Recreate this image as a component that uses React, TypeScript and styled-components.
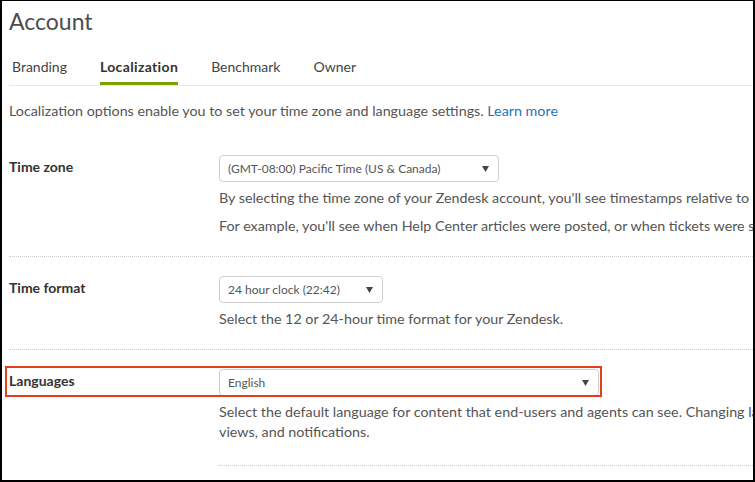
import React from 'react';
import styled, { createGlobalStyle } from 'styled-components';

const colors = {
    text: '#555555',
    label: '#333333',
    title: '#4d4d4d',
    link: '#1f73b7',
    green: '#78a300',
    line: '#e9e9e9',
    dotted: '#cccccc',
    highlight: '#e2401c',
};

const GlobalStyle = createGlobalStyle`
    html, body {
        margin: 0;
        padding: 0;
        background: #fff;
    }
    body {
        font-family: Lato, "Open Sans", "Liberation Sans", sans-serif;
        overflow: hidden;
    }
`;

interface ISetting {
    label: string
    value: string
    width: number
    notes: React.ReactNode[]
    highlighted?: boolean
    innerRule?: boolean
}

const settings: ISetting[] = [
    {
        label: 'Time zone',
        value: '(GMT-08:00) Pacific Time (US & Canada)',
        width: 280,
        notes: [
            "By selecting the time zone of your Zendesk account, you'll see timestamps relative to time zone in your account.",
            "For example, you'll see when Help Center articles were posted, or when tickets were submitted.",
        ],
    },
    {
        label: 'Time format',
        value: '24 hour clock (22:42)',
        width: 164,
        notes: ['Select the 12 or 24-hour time format for your Zendesk.'],
    },
    {
        label: 'Languages',
        value: 'English',
        width: 380,
        highlighted: true,
        innerRule: true,
        notes: [
            <>
                Select the default language for content that end-users and agents can see. Changing languages
                <br />
                views, and notifications.
            </>,
        ],
    },
];

const tabs = ['Branding', 'Localization', 'Benchmark', 'Owner'];

const Arrow = (): JSX.Element => (
    <svg width="7" height="6" viewBox="0 0 7 6">
        <path d="M0 0 H7 L3.5 6 Z" fill="#444" />
    </svg>
);

const App = (): JSX.Element => {
    return (
        <>
            <GlobalStyle />
            <SFrame>
                <STitle>Account</STitle>
                <STabs>
                    {tabs.map((tab) => (
                        <STab key={tab} active={tab === 'Localization'}>{tab}</STab>
                    ))}
                </STabs>
                <SIntro>
                    Localization options enable you to set your time zone and language settings. <SLink>Learn more</SLink>
                </SIntro>
                {settings.map((setting, i) => (
                    <SRow key={setting.label} first={i === 0} inner={!!setting.innerRule}>
                        {setting.highlighted && <SHighlight />}
                        <SLabel>{setting.label}</SLabel>
                        <SContent>
                            <SSelect style={{ width: setting.width }}>
                                <span>{setting.value}</span>
                                <Arrow />
                            </SSelect>
                            {setting.notes.map((note, n) => (
                                <SNote key={n}>{note}</SNote>
                            ))}
                        </SContent>
                    </SRow>
                ))}
            </SFrame>
        </>
    );
};

const SFrame = styled.div`
    width: 755px;
    height: 482px;
    box-sizing: border-box;
    border: 2px solid #000;
    border-top-width: 1px;
    padding-left: 7px;
    overflow: hidden;
    color: ${colors.text};
    font-size: 14.3px;
`;

const STitle = styled.h1`
    margin: 0;
    padding-top: 5px;
    height: 30px;
    font-size: 23px;
    line-height: 30px;
    font-weight: 400;
    color: ${colors.title};
`;

const STabs = styled.div`
    display: flex;
    gap: 33px;
    height: 50px;
    box-sizing: border-box;
    padding-left: 3px;
    border-bottom: 1px solid ${colors.line};
    align-items: flex-end;
`;

const STab = styled.div<{ active?: boolean }>`
    padding-bottom: 5px;
    line-height: 20px;
    font-size: 14px;
    color: ${(p): string => (p.active ? '#333' : '#444')};
    font-weight: ${(p): number => (p.active ? 700 : 400)};
    letter-spacing: ${(p): string => (p.active ? '0.35px' : '0')};
    border-bottom: 3px solid ${(p): string => (p.active ? colors.green : 'transparent')};
`;

const SIntro = styled.p`
    margin: 15px 0 0;
    line-height: 20px;
    white-space: nowrap;
`;

const SLink = styled.a`
    color: ${colors.link};
    cursor: pointer;
`;

const SRow = styled.div<{ first?: boolean, inner?: boolean }>`
    position: relative;
    display: grid;
    grid-template-columns: 210px 1fr;
    padding-top: ${(p): number => (p.first ? 34 : 19)}px;
    padding-bottom: 20px;
    & + & {
        border-top: 1px dotted ${colors.dotted};
    }
    ${(p): string => (p.inner ? 'padding-bottom: 0;' : '')}
`;

const SHighlight = styled.div`
    position: absolute;
    left: -4px;
    top: 16px;
    width: 597px;
    height: 31px;
    box-sizing: border-box;
    border: 2px solid ${colors.highlight};
    pointer-events: none;
    z-index: 1;
`;

const SLabel = styled.div`
    padding-top: 2px;
    line-height: 20px;
    font-size: 14px;
    font-weight: 700;
    color: ${colors.label};
`;

const SContent = styled.div`
    min-width: 0;
    white-space: nowrap;
    & > p:last-child {
        margin-bottom: 0;
    }
    ${SRow}:last-child & {
        padding-bottom: 23px;
        border-bottom: 1px dotted ${colors.dotted};
    }
`;

const SSelect = styled.div`
    display: flex;
    align-items: center;
    justify-content: space-between;
    height: 27px;
    box-sizing: border-box;
    padding: 0 9px 0 8px;
    border: 1px solid #cfcfcf;
    border-radius: 4px;
    font-size: 12px;
    color: #555;
`;

const SNote = styled.p`
    margin: 6px 0 8px;
    line-height: 20px;
`;

export default App;
